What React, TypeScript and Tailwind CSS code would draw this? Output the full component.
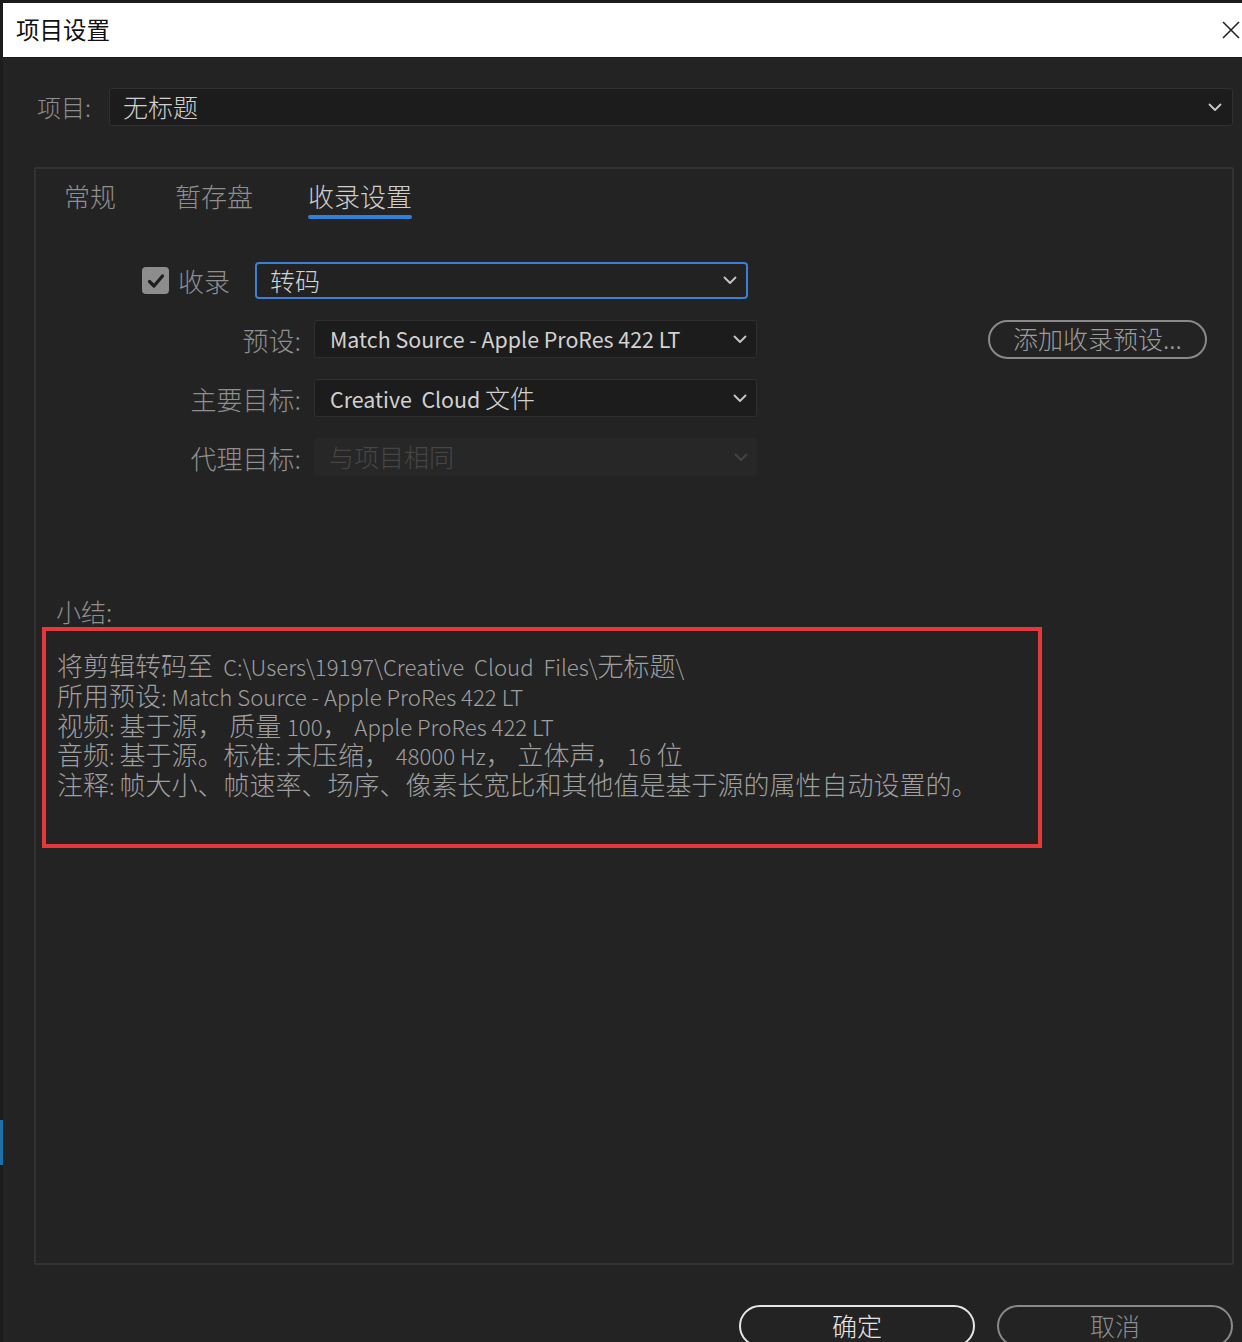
import React from "react";

const FONT = { fontFamily: '"Noto Sans CJK SC", "Noto Sans", sans-serif' };

function Chevron({ color = "#c8c8c8" }: { color?: string }) {
  return (
    <svg width="14" height="9" viewBox="0 0 14 9" fill="none">
      <polyline points="1.5,1.5 7,7 12.5,1.5" stroke={color} strokeWidth="1.8" strokeLinecap="round" strokeLinejoin="round" />
    </svg>
  );
}

function L({ children }: { children: React.ReactNode }) {
  return <span className="text-[22.2px] leading-none">{children}</span>;
}

function Line({ children }: { children: React.ReactNode }) {
  return <div className="h-[29.8px] leading-[29.8px]">{children}</div>;
}

export default function App() {
  return (
    <div className="w-[1242px] h-[1342px] bg-[#232323] overflow-hidden flex" style={FONT}>
      {/* left strip */}
      <div className="w-[3px] shrink-0 flex flex-col bg-[#1c1c1c]">
        <div className="h-[1120px] shrink-0" />
        <div className="h-[45px] shrink-0 bg-[#1d6fa8]" />
      </div>
      <div className="flex-1 flex flex-col">
        <div className="h-[3px] shrink-0 bg-[#1c1c1c]" />
        {/* title bar */}
        <div className="h-[54px] shrink-0 bg-white flex items-center justify-between pl-[13px] pr-[2px]">
          <span className="text-[23.5px] text-[#111]">项目设置</span>
          <svg width="18" height="18" viewBox="0 0 18 18">
            <line x1="1" y1="1" x2="17" y2="17" stroke="#222" strokeWidth="1.6" />
            <line x1="17" y1="1" x2="1" y2="17" stroke="#222" strokeWidth="1.6" />
          </svg>
        </div>
        <div className="h-[1px] shrink-0 bg-[#1a1a1a]" />
        {/* project row */}
        <div className="mt-[30px] shrink-0 flex items-center pl-[34px] pr-[9px] h-[38px]">
          <span className="text-[24px] text-[#8e8e8e] w-[72px] font-light">项目:</span>
          <div className="flex-1 h-[38px] bg-[#1c1c1c] border border-[#303030] rounded-[3px] flex items-center justify-between pl-[13px] pr-[10px]">
            <span className="text-[25px] text-[#d0d0d0] font-light">无标题</span>
            <Chevron />
          </div>
        </div>
        {/* panel */}
        <div className="mt-[41px] ml-[31px] mr-[8px] h-[1098px] shrink-0 border-2 border-[#333333] rounded-[2px] flex flex-col">
          {/* tabs */}
          <div className="pt-[9px] pl-[28px] flex">
            <div className="flex flex-col">
              <span className="text-[26px] leading-[36px] text-[#8f8f8f] font-light">常规</span>
            </div>
            <div className="flex flex-col ml-[59px]">
              <span className="text-[26px] leading-[36px] text-[#8f8f8f] font-light">暂存盘</span>
            </div>
            <div className="flex flex-col ml-[55px]">
              <span className="text-[26px] leading-[36px] text-[#cfcfcf] font-light">收录设置</span>
              <div className="h-[4px] mt-[1px] bg-[#2f80da] rounded-full" />
            </div>
          </div>
          {/* row 1 */}
          <div className="mt-[43px] ml-[106px] flex items-center h-[37px]">
            <div className="w-[27px] h-[27px] rounded-[4px] bg-[#8d8d8d] flex items-center justify-center">
              <svg width="18" height="16" viewBox="0 0 18 16">
                <polyline points="2.5,8.5 7,13 15.5,3" fill="none" stroke="#1e1e1e" strokeWidth="3.2" strokeLinecap="round" strokeLinejoin="round" />
              </svg>
            </div>
            <span className="ml-[9px] text-[26px] text-[#8f8f8f] font-light">收录</span>
            <div className="ml-[25px] w-[493px] h-[37px] border-2 border-[#3a7fd8] rounded-[4px] bg-[#222222] flex items-center justify-between pl-[13px] pr-[9px]">
              <span className="text-[25px] text-[#d2d2d2] font-light">转码</span>
              <Chevron />
            </div>
          </div>
          {/* row 2 */}
          <div className="mt-[21px] flex items-center h-[38px]">
            <span className="w-[265px] text-right text-[26px] text-[#8f8f8f] font-light">预设:</span>
            <div className="ml-[13px] w-[443px] h-[38px] bg-[#1c1c1c] border border-[#2f2f2f] rounded-[3px] flex items-center justify-between pl-[15px] pr-[9px]">
              <span className="text-[21.4px] text-[#d2d2d2]">Match Source - Apple ProRes 422 LT</span>
              <Chevron />
            </div>
            <div className="ml-[231px] w-[219px] h-[39px] rounded-full border-2 border-[#8a8a8a] flex items-center justify-center">
              <span className="text-[25px] text-[#9c9c9c] font-light">添加收录预设...</span>
            </div>
          </div>
          {/* row 3 */}
          <div className="mt-[21px] flex items-center h-[38px]">
            <span className="w-[265px] text-right text-[26px] text-[#8f8f8f] font-light">主要目标:</span>
            <div className="ml-[13px] w-[443px] h-[38px] bg-[#1c1c1c] border border-[#2f2f2f] rounded-[3px] flex items-center justify-between pl-[15px] pr-[9px]">
              <span className="text-[21.4px] text-[#d2d2d2]">
                Creative&nbsp; Cloud <span className="text-[25px] font-light">文件</span>
              </span>
              <Chevron />
            </div>
          </div>
          {/* row 4 */}
          <div className="mt-[21px] flex items-center h-[38px]">
            <span className="w-[265px] text-right text-[26px] text-[#8f8f8f] font-light">代理目标:</span>
            <div className="ml-[13px] w-[443px] h-[38px] bg-[#272727] rounded-[3px] flex items-center justify-between pl-[15px] pr-[9px]">
              <span className="text-[25px] text-[#464646] font-light">与项目相同</span>
              <Chevron color="#444444" />
            </div>
          </div>
          {/* summary */}
          <div className="mt-[120px] pl-[20px] text-[25px] leading-[30px] text-[#8f8f8f] font-light">小结:</div>
          <div className="mt-[1px] ml-[6px] w-[1000px] h-[221px] border-4 border-[#e4383c] pt-[19px] pl-[11px] text-[26px] text-[#9f9f9f] font-light whitespace-nowrap">
            <Line>
              将剪辑转码至 <L>&thinsp;C:\Users\19197\Creative&nbsp; Cloud&nbsp; Files\</L>无标题<L>\</L>
            </Line>
            <Line>
              所用预设<L>: Match Source - Apple ProRes 422 LT</L>
            </Line>
            <Line>
              视频<L>: </L>基于源， 质量 <L>100</L>， <L>Apple ProRes 422 LT</L>
            </Line>
            <Line>
              音频<L>: </L>基于源。标准<L>: </L>未压缩， <L>48000 Hz</L>， 立体声， <L>16</L> 位
            </Line>
            <Line>
              注释<L>: </L>帧大小、帧速率、场序、像素长宽比和其他值是基于源的属性自动设置的。
            </Line>
          </div>
        </div>
        {/* footer */}
        <div className="mt-[40px] shrink-0 flex justify-end pr-[9px] gap-[22px]">
          <div className="w-[236px] h-[42px] shrink-0 rounded-full border-2 border-[#e6e6e6] flex items-center justify-center">
            <span className="text-[25px] text-[#e6e6e6] font-light">确定</span>
          </div>
          <div className="w-[236px] h-[42px] shrink-0 rounded-full border-2 border-[#8a8a8a] flex items-center justify-center">
            <span className="text-[25px] text-[#8e8e8e] font-light">取消</span>
          </div>
        </div>
      </div>
    </div>
  );
}
